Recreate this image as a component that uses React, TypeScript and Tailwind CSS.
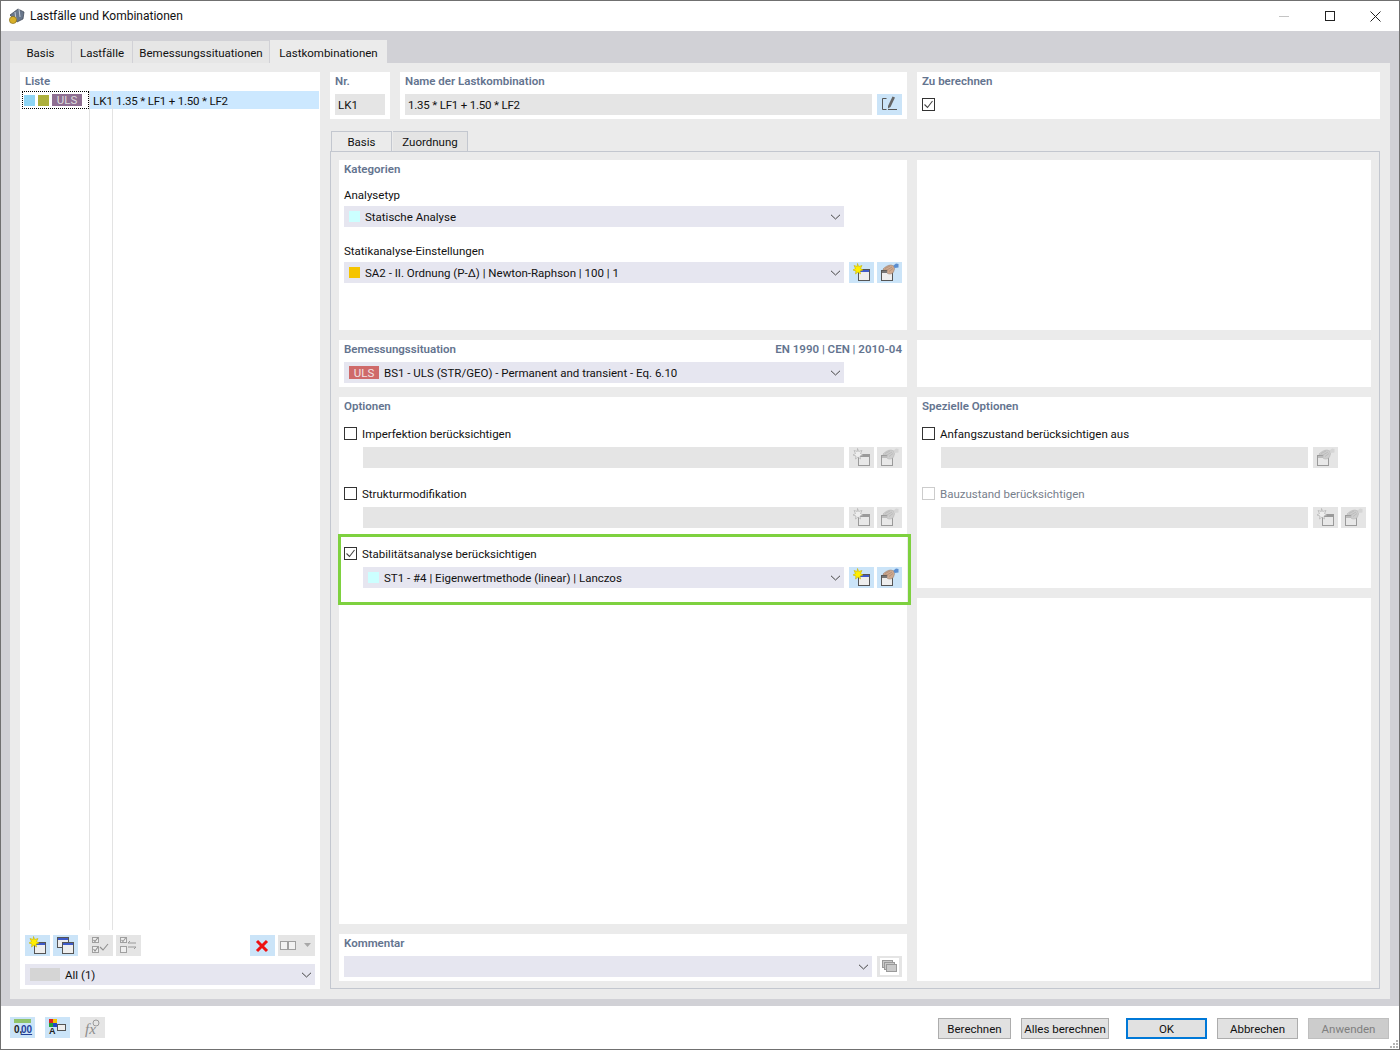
import { ReactNode } from "react";

function NewIcon({ off }: { off?: boolean }) {
  return (
    <svg width="25" height="21" viewBox="0 0 25 21">
      <rect x="9.500" y="7.500" width="11" height="11" fill={off ? "#e8e8e8" : "#eeeeee"} stroke={off ? "#9a9a9a" : "#555555"} />
      <rect x="10" y="8" width="10" height="2" fill={off ? "#9a9a9a" : "#3f5bc8"} />
      <path d="M8.500 1.500l1.200 3 3.300-1-1.500 3 2.500 1.500-3 1 .5 3-2.500-2-2.500 2 .5-3-3-1 2.500-1.500-1.500-3 3.300 1z" fill={off ? "#eeeeee" : "#ffee00"} stroke={off ? "#aaaaaa" : "#c9b400"} strokeWidth="0.6" />
    </svg>
  );
}

function HandIcon({ off }: { off?: boolean }) {
  return (
    <svg width="25" height="21" viewBox="0 0 25 21">
      <rect x="4.500" y="8.500" width="11" height="10" fill={off ? "#e8e8e8" : "#eeeeee"} stroke={off ? "#9a9a9a" : "#555555"} />
      <rect x="5" y="9" width="5" height="2" fill={off ? "#bdbdbd" : "#777777"} />
      <path d="M6 7C8 5 11 3 14 3l3 1 .5 3-1 3c-1 2-4 2.500-6 1.500l-.5-3.500-3.500 0z" fill={off ? "#cdcdcd" : "#cfa98f"} stroke={off ? "#b0b0b0" : "#8f7767"} strokeWidth="0.5" />
      <path d="M8 6.500l5-2.500M10 8l5-3M12 9.500l4-3" stroke={off ? "#aaaaaa" : "#9a7a64"} strokeWidth="0.5" />
      <path d="M16.500 3.500l2.500-2 2.500.5v3.500l-4 .5z" fill={off ? "#d5d5d5" : "#5b8ed0"} />
    </svg>
  );
}

function Btn({ off, children, w = "w-[25px]" }: { off?: boolean; children: ReactNode; w?: string }) {
  return (
    <div className={`${w} h-[21px] shrink-0 flex items-center justify-center ${off ? "bg-[#e5e5e5]" : "bg-[#cbe4f8]"}`}>
      {children}
    </div>
  );
}

function Chevron() {
  return (
    <svg width="11" height="6" viewBox="0 0 11 6" className="shrink-0">
      <path d="M1 .8l4.500 4.200L10 .8" fill="none" stroke="#444444" strokeWidth="1" />
    </svg>
  );
}

function Select({ w, children }: { w: string; children: ReactNode }) {
  return (
    <div className={`${w} h-[21px] shrink-0 bg-[#e6e6f0] flex items-center pr-[3px]`}>
      <div className="flex-1 flex items-center min-w-0 whitespace-nowrap">{children}</div>
      <Chevron />
    </div>
  );
}

function Check({ checked, off }: { checked?: boolean; off?: boolean }) {
  return (
    <div className={`w-[13px] h-[13px] shrink-0 border bg-white ${off ? "border-[#cccccc]" : "border-[#333333]"}`}>
      {checked && (
        <svg width="11" height="11" viewBox="0 0 11 11">
          <path d="M1.500 5.500l3 3 5-6.500" fill="none" stroke="#444444" strokeWidth="1.1" />
        </svg>
      )}
    </div>
  );
}

function Panel({ className, children }: { className: string; children?: ReactNode }) {
  return <div className={`bg-white ${className}`}>{children}</div>;
}

function Heading({ children }: { children: ReactNode }) {
  return <div className="h-[18px] flex items-center font-semibold text-[#64748f] whitespace-nowrap">{children}</div>;
}

function Swatch({ color }: { color: string }) {
  return <div className={`w-[11px] h-[11px] ml-[5px] mr-[5px] shrink-0 ${color}`} />;
}

function PlainField({ w }: { w: string }) {
  return <div className={`${w} h-[21px] shrink-0 bg-[#e5e5e5]`} />;
}

function CheckRow({ label, checked, off, className }: { label: string; checked?: boolean; off?: boolean; className: string }) {
  return (
    <div className={`h-[16px] flex items-center gap-[5px] ${className}`}>
      <Check checked={checked} off={off} />
      <span className={`pt-px ${off ? "text-[#77808c]" : ""}`}>{label}</span>
    </div>
  );
}

function ListIconCopy() {
  return (
    <svg width="25" height="21" viewBox="0 0 25 21">
      <rect x="4.500" y="2.500" width="11" height="10" fill="#eeeeee" stroke="#555555" />
      <rect x="5" y="3" width="10" height="2" fill="#3f5bc8" />
      <rect x="9.500" y="7.500" width="11" height="11" fill="#eeeeee" stroke="#555555" />
      <rect x="10" y="8" width="10" height="2" fill="#3f5bc8" />
    </svg>
  );
}

export default function App() {
  return (
    <div className="w-[1400px] h-[1050px] flex flex-col border border-[#707070] bg-white text-[11.5px] leading-4 text-[#111111] font-['Roboto',sans-serif] relative overflow-hidden">
      {/* title bar */}
      <div className="h-[30px] flex items-center shrink-0">
        <svg width="18" height="18" viewBox="0 0 18 18" className="ml-[7px]">
          <path d="M2 8l8-6 6 3-1 7-6 3z" fill="#69778c" stroke="#39424f" strokeWidth="0.7" />
          <path d="M11 2l1 8M7 5l1 8" stroke="#c6ced9" strokeWidth="1" />
          <circle cx="5" cy="13" r="3.600" fill="#d8b02a" stroke="#7d6510" strokeWidth="0.6" />
        </svg>
        <span className="ml-[4px] text-[12px]">Lastfälle und Kombinationen</span>
        <div className="ml-auto flex items-center">
          <div className="w-[10px] h-px bg-[#c4c4c4] mr-[36px]" />
          <div className="w-[10px] h-[10px] border border-[#222222] mr-[35px]" />
          <svg width="11" height="11" viewBox="0 0 11 11" className="mr-[18px]">
            <path d="M.5.5l10 10M10.500.5l-10 10" stroke="#222222" strokeWidth="1" />
          </svg>
        </div>
      </div>

      {/* main area */}
      <div className="h-[975px] shrink-0 bg-[#d1d1d6] px-[9px] flex flex-col">
        <div className="h-[32px] shrink-0 flex items-end gap-px">
          <div className="w-[61px] h-[22px] pt-[2px] bg-[#e6e6e6] flex items-center justify-center">Basis</div>
          <div className="w-[60px] h-[22px] pt-[2px] bg-[#e6e6e6] flex items-center justify-center">Lastfälle</div>
          <div className="w-[136px] h-[22px] pt-[2px] bg-[#e6e6e6] flex items-center justify-center">Bemessungssituationen</div>
          <div className="w-[117px] h-[23px] pt-[3px] bg-[#ebebeb] flex items-center justify-center">Lastkombinationen</div>
        </div>

        <div className="h-[936px] shrink-0 bg-[#ebebeb] pt-[9px] pl-[10px] pr-[10px] flex gap-[10px]">
          {/* list column */}
          <Panel className="w-[300px] h-[917px] shrink-0 flex flex-col">
            <div className="pl-[5px]">
              <Heading>Liste</Heading>
            </div>
            <div className="h-[839px] mt-px flex shrink-0 pl-[2px] pr-px">
              <div className="w-[68px] border-r border-[#e3e3e3]">
                <div className="h-[18px] border border-dotted border-black bg-white flex items-center pl-px">
                  <div className="w-[11px] h-[11px] bg-[#8ed5f5]" />
                  <div className="w-[11px] h-[11px] bg-[#adb03c] ml-[3px]" />
                  <div className="w-[30px] h-[12px] bg-[#8f6f92] ml-[3px] text-[#dddddd] flex items-center justify-center">ULS</div>
                </div>
              </div>
              <div className="w-[23px] border-r border-[#e3e3e3]">
                <div className="h-[18px] bg-[#cce8ff] pl-[3px] pt-px flex items-center">LK1</div>
              </div>
              <div className="flex-1">
                <div className="h-[18px] bg-[#cce8ff] pl-[3px] pt-px flex items-center tracking-[-0.2px]">1.35 * LF1 + 1.50 * LF2</div>
              </div>
            </div>
            <div className="mt-[5px] flex px-[5px] shrink-0">
              <Btn><NewIcon /></Btn>
              <div className="ml-[3px]"><Btn><ListIconCopy /></Btn></div>
              <div className="ml-[10px]">
                <Btn off>
                  <svg width="25" height="21" viewBox="0 0 25 21">
                    <rect x="4.500" y="2.500" width="6" height="5" fill="#eeeeee" stroke="#a0a0a0" />
                    <rect x="4.500" y="11.500" width="6" height="6" fill="#eeeeee" stroke="#a0a0a0" />
                    <path d="M5.500 5l1.500 1.500 3-4M5.500 14l1.500 2 3-4M12 12l3 3 5-6" fill="none" stroke="#8f8f8f" strokeWidth="1.1" />
                  </svg>
                </Btn>
              </div>
              <div className="ml-[3px]">
                <Btn off>
                  <svg width="25" height="21" viewBox="0 0 25 21">
                    <rect x="4.500" y="2.500" width="6" height="5" fill="#eeeeee" stroke="#a0a0a0" />
                    <rect x="4.500" y="11.500" width="6" height="6" fill="#eeeeee" stroke="#a0a0a0" />
                    <path d="M5.500 5l1.500 1.500 3-4M12 8h8M20 12h-8" fill="none" stroke="#9a9a9a" strokeWidth="1.1" />
                    <path d="M12 8l2-2M20 12l-2 2" fill="none" stroke="#9a9a9a" />
                  </svg>
                </Btn>
              </div>
              <div className="ml-auto">
                <Btn>
                  <svg width="14" height="14" viewBox="0 0 14 14" className="mr-[1px]">
                    <path d="M2 2l10 10M12 2L2 12" stroke="#ee1111" strokeWidth="3" />
                  </svg>
                </Btn>
              </div>
              <div className="ml-[3px]">
                <Btn off w="w-[37px]">
                  <svg width="37" height="21" viewBox="0 0 37 21">
                    <rect x="2.500" y="6.500" width="7" height="8" fill="#f2f2f2" stroke="#a0a0a0" />
                    <rect x="10.500" y="6.500" width="7" height="8" fill="#f2f2f2" stroke="#a0a0a0" />
                    <path d="M26 8h7l-3.500 4z" fill="#a8a8a8" />
                  </svg>
                </Btn>
              </div>
            </div>
            <div className="mt-[8px] px-[5px] shrink-0">
              <Select w="w-[290px]">
                <div className="w-[30px] h-[13px] bg-[#d5d5d5] ml-[5px] mr-[5px]" />
                <span className="pt-px">All (1)</span>
              </Select>
            </div>
          </Panel>

          {/* right side */}
          <div className="w-[1050px] shrink-0 flex flex-col">
            <div className="flex gap-[10px] shrink-0">
              <Panel className="w-[60px] h-[47px] pl-[5px]">
                <Heading>Nr.</Heading>
                <div className="w-[50px] h-[21px] mt-[4px] bg-[#e5e5e5] pl-[3px] pt-px flex items-center">LK1</div>
              </Panel>
              <Panel className="w-[507px] h-[47px] pl-[5px]">
                <Heading>Name der Lastkombination</Heading>
                <div className="flex mt-[4px]">
                  <div className="w-[467px] h-[21px] bg-[#e5e5e5] pl-[3px] pt-px flex items-center tracking-[-0.2px]">1.35 * LF1 + 1.50 * LF2</div>
                  <div className="ml-[5px]">
                    <Btn>
                      <svg width="25" height="21" viewBox="0 0 25 21">
                        <path d="M9.500 4.500h-4v11h4M11 15.500h9" fill="none" stroke="#555555" />
                        <path d="M15.500 2.500l2.500 1-4.500 9.500-2.500 1.500 0-2.500z" fill="#666666" />
                      </svg>
                    </Btn>
                  </div>
                </div>
              </Panel>
              <Panel className="w-[463px] h-[47px] pl-[5px]">
                <Heading>Zu berechnen</Heading>
                <div className="mt-[8px]"><Check checked /></div>
              </Panel>
            </div>

            <div className="mt-[12px] h-[20px] flex shrink-0 pl-px gap-px">
              <div className="w-[61px] h-[20px] bg-[#ebebeb] border-t border-x border-[#c3c7cf] flex items-center justify-center">Basis</div>
              <div className="w-[75px] h-[20px] bg-[#e4e4e4] border-t border-r border-[#c3c7cf] flex items-center justify-center">Zuordnung</div>
            </div>

            <div className="h-[838px] shrink-0 border border-[#c3c7cf] px-[8px] pt-[8px] flex gap-[10px]">
              <div className="w-[568px] shrink-0 flex flex-col gap-[10px]">
                <Panel className="h-[170px] px-[5px] shrink-0">
                  <Heading>Kategorien</Heading>
                  <div className="mt-[9px] h-[16px] flex items-center">Analysetyp</div>
                  <div className="mt-[3px]">
                    <Select w="w-[500px]">
                      <Swatch color="bg-[#ccffff]" />
                      <span className="pt-px">Statische Analyse</span>
                    </Select>
                  </div>
                  <div className="mt-[16px] h-[16px] flex items-center">Statikanalyse-Einstellungen</div>
                  <div className="mt-[3px] flex">
                    <Select w="w-[500px]">
                      <Swatch color="bg-[#f5c400]" />
                      <span className="pt-px">SA2 - II. Ordnung (P-Δ) | Newton-Raphson | 100 | 1</span>
                    </Select>
                    <div className="ml-[5px]"><Btn><NewIcon /></Btn></div>
                    <div className="ml-[3px]"><Btn><HandIcon /></Btn></div>
                  </div>
                </Panel>

                <Panel className="h-[47px] px-[5px] shrink-0">
                  <div className="flex justify-between">
                    <Heading>Bemessungssituation</Heading>
                    <Heading>EN 1990 | CEN | 2010-04</Heading>
                  </div>
                  <div className="mt-[4px]">
                    <Select w="w-[500px]">
                      <div className="w-[30px] h-[13px] ml-[5px] mr-[5px] bg-[#cf6a6a] text-[#f2e4e4] flex items-center justify-center">ULS</div>
                      <span className="pt-px">BS1 - ULS (STR/GEO) - Permanent and transient - Eq. 6.10</span>
                    </Select>
                  </div>
                </Panel>

                <Panel className="h-[527px] px-[5px] shrink-0 relative">
                  <Heading>Optionen</Heading>
                  <CheckRow className="mt-[10px]" label="Imperfektion berücksichtigen" />
                  <div className="mt-[6px] pl-[19px] flex">
                    <PlainField w="w-[481px]" />
                    <div className="ml-[5px]"><Btn off><NewIcon off /></Btn></div>
                    <div className="ml-[3px]"><Btn off><HandIcon off /></Btn></div>
                  </div>
                  <CheckRow className="mt-[17px]" label="Strukturmodifikation" />
                  <div className="mt-[6px] pl-[19px] flex">
                    <PlainField w="w-[481px]" />
                    <div className="ml-[5px]"><Btn off><NewIcon off /></Btn></div>
                    <div className="ml-[3px]"><Btn off><HandIcon off /></Btn></div>
                  </div>
                  <CheckRow className="mt-[17px]" label="Stabilitätsanalyse berücksichtigen" checked />
                  <div className="mt-[6px] pl-[19px] flex">
                    <Select w="w-[481px]">
                      <Swatch color="bg-[#ccffff]" />
                      <span className="pt-px">ST1 - #4 | Eigenwertmethode (linear) | Lanczos</span>
                    </Select>
                    <div className="ml-[5px]"><Btn><NewIcon /></Btn></div>
                    <div className="ml-[3px]"><Btn><HandIcon /></Btn></div>
                  </div>
                  {/* green highlight frame */}
                  <div className="absolute left-[-1px] top-[137px] w-[573px] h-[71px] border-[3px] border-[#7ed13f] pointer-events-none" />
                </Panel>

                <Panel className="h-[47px] px-[5px] shrink-0">
                  <Heading>Kommentar</Heading>
                  <div className="mt-[4px] flex">
                    <Select w="w-[528px]"><span /></Select>
                    <div className="ml-[5px]">
                      <Btn off>
                        <svg width="25" height="21" viewBox="0 0 25 21">
                          <rect x="3" y="2" width="19" height="17" fill="#ffffff" />
                          <rect x="5.500" y="4.500" width="10" height="7" fill="#c9c9c9" stroke="#9a9a9a" />
                          <rect x="7.500" y="6.500" width="10" height="7" fill="#c9c9c9" stroke="#9a9a9a" />
                          <rect x="9.500" y="8.500" width="10" height="7" fill="#c9c9c9" stroke="#9a9a9a" />
                        </svg>
                      </Btn>
                    </div>
                  </div>
                </Panel>
              </div>

              <div className="w-[454px] shrink-0 flex flex-col gap-[10px]">
                <Panel className="h-[170px] shrink-0" />
                <Panel className="h-[47px] shrink-0" />
                <Panel className="h-[191px] px-[5px] shrink-0">
                  <Heading>Spezielle Optionen</Heading>
                  <CheckRow className="mt-[10px]" label="Anfangszustand berücksichtigen aus" />
                  <div className="mt-[6px] pl-[19px] flex">
                    <PlainField w="w-[367px]" />
                    <div className="ml-[5px]"><Btn off><HandIcon off /></Btn></div>
                  </div>
                  <CheckRow className="mt-[17px]" label="Bauzustand berücksichtigen" off />
                  <div className="mt-[6px] pl-[19px] flex">
                    <PlainField w="w-[367px]" />
                    <div className="ml-[5px]"><Btn off><NewIcon off /></Btn></div>
                    <div className="ml-[3px]"><Btn off><HandIcon off /></Btn></div>
                  </div>
                </Panel>
                <Panel className="h-[383px] shrink-0" />
              </div>
            </div>
          </div>
        </div>
      </div>

      {/* footer */}
      <div className="flex-1 flex pl-[9px] relative">
        <div className="flex gap-[10px] mt-[11px] h-[21px]">
          <Btn>
            <svg width="25" height="21" viewBox="0 0 25 21">
              <rect x="4" y="2" width="17" height="4" fill="#8fc36b" />
              <text x="4" y="16" fontSize="10" fontWeight="700" fill="#222222" fontFamily="Liberation Sans">0,</text>
              <text x="11" y="16" fontSize="10" fontWeight="700" fill="#1f3f9a" fontFamily="Liberation Sans" textDecoration="underline">00</text>
            </svg>
          </Btn>
          <Btn>
            <svg width="25" height="21" viewBox="0 0 25 21">
              <rect x="4" y="2" width="4" height="4" fill="#dd2222" />
              <rect x="8" y="2" width="4" height="4" fill="#f2c400" />
              <rect x="4" y="6" width="4" height="4" fill="#22a33a" />
              <rect x="8" y="6" width="4" height="4" fill="#2244cc" />
              <text x="4" y="17" fontSize="9" fontWeight="700" fill="#222222" fontFamily="Liberation Sans">A</text>
              <rect x="12.500" y="7.500" width="8" height="6" fill="#eeeeee" stroke="#555555" />
            </svg>
          </Btn>
          <Btn off>
            <svg width="25" height="21" viewBox="0 0 25 21">
              <text x="5" y="17" fontSize="15" fontStyle="italic" fill="#8c8c8c" fontFamily="Liberation Serif">fx</text>
              <circle cx="16" cy="6" r="3" fill="none" stroke="#9a9a9a" />
            </svg>
          </Btn>
        </div>
        <div className="ml-auto flex mt-[12px] h-[21px] pr-[10px] whitespace-nowrap">
          <div className="w-[73px] bg-[#e1e1e1] border border-[#adadad] flex items-center justify-center">Berechnen</div>
          <div className="w-[88px] ml-[10px] bg-[#e1e1e1] border border-[#adadad] flex items-center justify-center">Alles berechnen</div>
          <div className="w-[81px] ml-[17px] bg-[#e1e1e1] border-2 border-[#0078d7] flex items-center justify-center">OK</div>
          <div className="w-[81px] ml-[10px] bg-[#e1e1e1] border border-[#adadad] flex items-center justify-center">Abbrechen</div>
          <div className="w-[81px] ml-[10px] bg-[#cccccc] border border-[#bfbfbf] text-[#7f7f7f] flex items-center justify-center">Anwenden</div>
        </div>
        <svg width="10" height="10" viewBox="0 0 10 10" className="absolute right-0 bottom-0">
          <path d="M7 1h2v2H7zM4 4h2v2H4zM7 4h2v2H7zM1 7h2v2H1zM4 7h2v2H4zM7 7h2v2H7z" fill="#b5b5b5" />
        </svg>
      </div>
    </div>
  );
}
